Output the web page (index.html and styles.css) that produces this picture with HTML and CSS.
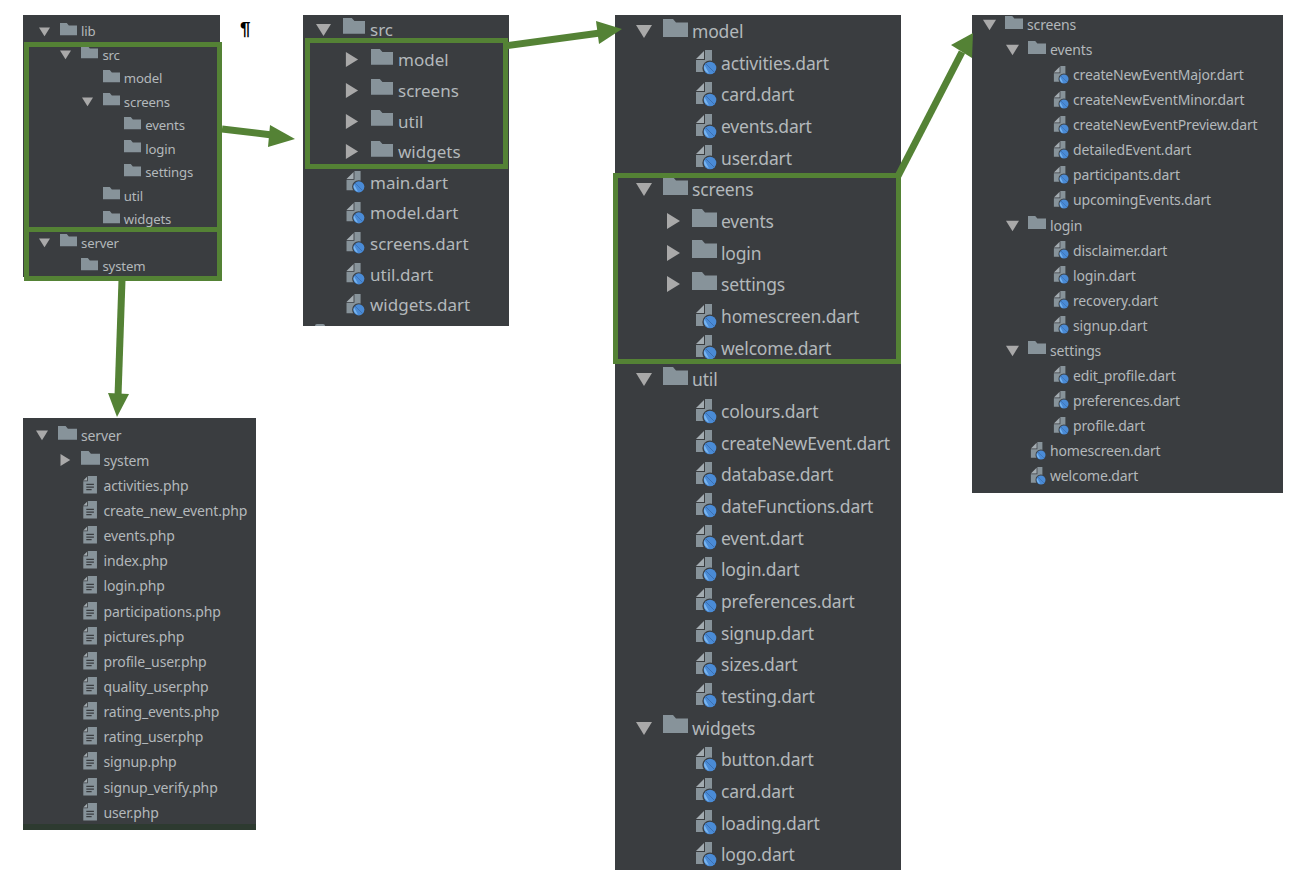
FILE: index.html
```html
<!DOCTYPE html>
<html lang="en">
<head>
    <meta charset="UTF-8">
    <meta name="viewport" content="width=device-width, initial-scale=1.0">
    <title>Project structure</title>
    <link rel="stylesheet" href="styles.css">
</head>
<body>
    <!-- shared icons -->
    <svg class="sprite" aria-hidden="true">
        <symbol id="down" viewBox="0 0 16 16"><path d="M0 2H16L8 15Z"/></symbol>
        <symbol id="right" viewBox="0 0 16 16"><path d="M2 0L15 8L2 16Z"/></symbol>
        <symbol id="folder" viewBox="0 0 25 25"><path d="M0 0H10L13 3.5H25V18H0Z" fill="#87939a"/></symbol>
        <symbol id="dart" viewBox="0 0 25 25">
            <path d="M4 9L12 1V9Z" fill="#a3acb1"/>
            <path d="M13 0H20V22H4V10H13Z" fill="#87939a"/>
            <circle cx="18" cy="18" r="7.6" fill="#3a3d40"/>
            <circle cx="18" cy="18" r="6.3" fill="#4a8bd6"/>
            <path d="M12.5 15L17 23.5A6.3 6.3 0 0 1 12.5 15Z" fill="#7ab6f0"/>
            <path d="M13.5 13.5L22.5 22.5" stroke="#3b6fb0" stroke-width="1"/>
        </symbol>
        <symbol id="php" viewBox="0 0 25 25">
            <path d="M3 6L8 1V6Z" fill="#a3acb1"/>
            <path d="M9 0H21V23H3V7H9Z" fill="#87939a"/>
            <path d="M7 11H17M7 14.5H17M7 18H14" stroke="#3a3d40" stroke-width="1.6"/>
        </symbol>
    </svg>

    <div class="canvas">
        <span class="pilcrow">¶</span>

        <!-- overview -->
        <div class="panel panel-lib">
            <div class="row"><svg class="tw"><use href="#down"/></svg><svg class="ico"><use href="#folder"/></svg>lib</div>
            <div class="row d1"><svg class="tw"><use href="#down"/></svg><svg class="ico"><use href="#folder"/></svg>src</div>
            <div class="row d2"><i class="tw"></i><svg class="ico"><use href="#folder"/></svg>model</div>
            <div class="row d2"><svg class="tw"><use href="#down"/></svg><svg class="ico"><use href="#folder"/></svg>screens</div>
            <div class="row d3"><i class="tw"></i><svg class="ico"><use href="#folder"/></svg>events</div>
            <div class="row d3"><i class="tw"></i><svg class="ico"><use href="#folder"/></svg>login</div>
            <div class="row d3"><i class="tw"></i><svg class="ico"><use href="#folder"/></svg>settings</div>
            <div class="row d2"><i class="tw"></i><svg class="ico"><use href="#folder"/></svg>util</div>
            <div class="row d2"><i class="tw"></i><svg class="ico"><use href="#folder"/></svg>widgets</div>
            <div class="row"><svg class="tw"><use href="#down"/></svg><svg class="ico"><use href="#folder"/></svg>server</div>
            <div class="row d1"><i class="tw"></i><svg class="ico"><use href="#folder"/></svg>system</div>
        </div>

        <!-- src -->
        <div class="panel panel-src">
            <div class="row"><svg class="tw"><use href="#down"/></svg><svg class="ico"><use href="#folder"/></svg>src</div>
            <div class="row d1"><svg class="tw"><use href="#right"/></svg><svg class="ico"><use href="#folder"/></svg>model</div>
            <div class="row d1"><svg class="tw"><use href="#right"/></svg><svg class="ico"><use href="#folder"/></svg>screens</div>
            <div class="row d1"><svg class="tw"><use href="#right"/></svg><svg class="ico"><use href="#folder"/></svg>util</div>
            <div class="row d1"><svg class="tw"><use href="#right"/></svg><svg class="ico"><use href="#folder"/></svg>widgets</div>
            <div class="row"><i class="tw"></i><svg class="ico"><use href="#dart"/></svg>main.dart</div>
            <div class="row"><i class="tw"></i><svg class="ico"><use href="#dart"/></svg>model.dart</div>
            <div class="row"><i class="tw"></i><svg class="ico"><use href="#dart"/></svg>screens.dart</div>
            <div class="row"><i class="tw"></i><svg class="ico"><use href="#dart"/></svg>util.dart</div>
            <div class="row"><i class="tw"></i><svg class="ico"><use href="#dart"/></svg>widgets.dart</div>
            <div class="panel-peek"></div>
        </div>

        <!-- model, screens, util, widgets -->
        <div class="panel panel-model">
            <div class="row"><svg class="tw"><use href="#down"/></svg><svg class="ico"><use href="#folder"/></svg>model</div>
            <div class="row d1"><i class="tw"></i><svg class="ico"><use href="#dart"/></svg>activities.dart</div>
            <div class="row d1"><i class="tw"></i><svg class="ico"><use href="#dart"/></svg>card.dart</div>
            <div class="row d1"><i class="tw"></i><svg class="ico"><use href="#dart"/></svg>events.dart</div>
            <div class="row d1"><i class="tw"></i><svg class="ico"><use href="#dart"/></svg>user.dart</div>
            <div class="row"><svg class="tw"><use href="#down"/></svg><svg class="ico"><use href="#folder"/></svg>screens</div>
            <div class="row d1"><svg class="tw"><use href="#right"/></svg><svg class="ico"><use href="#folder"/></svg>events</div>
            <div class="row d1"><svg class="tw"><use href="#right"/></svg><svg class="ico"><use href="#folder"/></svg>login</div>
            <div class="row d1"><svg class="tw"><use href="#right"/></svg><svg class="ico"><use href="#folder"/></svg>settings</div>
            <div class="row d1"><i class="tw"></i><svg class="ico"><use href="#dart"/></svg>homescreen.dart</div>
            <div class="row d1"><i class="tw"></i><svg class="ico"><use href="#dart"/></svg>welcome.dart</div>
            <div class="row"><svg class="tw"><use href="#down"/></svg><svg class="ico"><use href="#folder"/></svg>util</div>
            <div class="row d1"><i class="tw"></i><svg class="ico"><use href="#dart"/></svg>colours.dart</div>
            <div class="row d1"><i class="tw"></i><svg class="ico"><use href="#dart"/></svg>createNewEvent.dart</div>
            <div class="row d1"><i class="tw"></i><svg class="ico"><use href="#dart"/></svg>database.dart</div>
            <div class="row d1"><i class="tw"></i><svg class="ico"><use href="#dart"/></svg>dateFunctions.dart</div>
            <div class="row d1"><i class="tw"></i><svg class="ico"><use href="#dart"/></svg>event.dart</div>
            <div class="row d1"><i class="tw"></i><svg class="ico"><use href="#dart"/></svg>login.dart</div>
            <div class="row d1"><i class="tw"></i><svg class="ico"><use href="#dart"/></svg>preferences.dart</div>
            <div class="row d1"><i class="tw"></i><svg class="ico"><use href="#dart"/></svg>signup.dart</div>
            <div class="row d1"><i class="tw"></i><svg class="ico"><use href="#dart"/></svg>sizes.dart</div>
            <div class="row d1"><i class="tw"></i><svg class="ico"><use href="#dart"/></svg>testing.dart</div>
            <div class="row"><svg class="tw"><use href="#down"/></svg><svg class="ico"><use href="#folder"/></svg>widgets</div>
            <div class="row d1"><i class="tw"></i><svg class="ico"><use href="#dart"/></svg>button.dart</div>
            <div class="row d1"><i class="tw"></i><svg class="ico"><use href="#dart"/></svg>card.dart</div>
            <div class="row d1"><i class="tw"></i><svg class="ico"><use href="#dart"/></svg>loading.dart</div>
            <div class="row d1"><i class="tw"></i><svg class="ico"><use href="#dart"/></svg>logo.dart</div>
        </div>

        <!-- screens -->
        <div class="panel panel-screens">
            <div class="row"><svg class="tw"><use href="#down"/></svg><svg class="ico"><use href="#folder"/></svg>screens</div>
            <div class="row d1"><svg class="tw"><use href="#down"/></svg><svg class="ico"><use href="#folder"/></svg>events</div>
            <div class="row d2"><i class="tw"></i><svg class="ico"><use href="#dart"/></svg>createNewEventMajor.dart</div>
            <div class="row d2"><i class="tw"></i><svg class="ico"><use href="#dart"/></svg>createNewEventMinor.dart</div>
            <div class="row d2"><i class="tw"></i><svg class="ico"><use href="#dart"/></svg>createNewEventPreview.dart</div>
            <div class="row d2"><i class="tw"></i><svg class="ico"><use href="#dart"/></svg>detailedEvent.dart</div>
            <div class="row d2"><i class="tw"></i><svg class="ico"><use href="#dart"/></svg>participants.dart</div>
            <div class="row d2"><i class="tw"></i><svg class="ico"><use href="#dart"/></svg>upcomingEvents.dart</div>
            <div class="row d1"><svg class="tw"><use href="#down"/></svg><svg class="ico"><use href="#folder"/></svg>login</div>
            <div class="row d2"><i class="tw"></i><svg class="ico"><use href="#dart"/></svg>disclaimer.dart</div>
            <div class="row d2"><i class="tw"></i><svg class="ico"><use href="#dart"/></svg>login.dart</div>
            <div class="row d2"><i class="tw"></i><svg class="ico"><use href="#dart"/></svg>recovery.dart</div>
            <div class="row d2"><i class="tw"></i><svg class="ico"><use href="#dart"/></svg>signup.dart</div>
            <div class="row d1"><svg class="tw"><use href="#down"/></svg><svg class="ico"><use href="#folder"/></svg>settings</div>
            <div class="row d2"><i class="tw"></i><svg class="ico"><use href="#dart"/></svg>edit_profile.dart</div>
            <div class="row d2"><i class="tw"></i><svg class="ico"><use href="#dart"/></svg>preferences.dart</div>
            <div class="row d2"><i class="tw"></i><svg class="ico"><use href="#dart"/></svg>profile.dart</div>
            <div class="row d1"><i class="tw"></i><svg class="ico"><use href="#dart"/></svg>homescreen.dart</div>
            <div class="row d1"><i class="tw"></i><svg class="ico"><use href="#dart"/></svg>welcome.dart</div>
        </div>

        <!-- server -->
        <div class="panel panel-server">
            <div class="row"><svg class="tw"><use href="#down"/></svg><svg class="ico"><use href="#folder"/></svg>server</div>
            <div class="row d1"><svg class="tw"><use href="#right"/></svg><svg class="ico"><use href="#folder"/></svg>system</div>
            <div class="row d1"><i class="tw"></i><svg class="ico"><use href="#php"/></svg>activities.php</div>
            <div class="row d1"><i class="tw"></i><svg class="ico"><use href="#php"/></svg>create_new_event.php</div>
            <div class="row d1"><i class="tw"></i><svg class="ico"><use href="#php"/></svg>events.php</div>
            <div class="row d1"><i class="tw"></i><svg class="ico"><use href="#php"/></svg>index.php</div>
            <div class="row d1"><i class="tw"></i><svg class="ico"><use href="#php"/></svg>login.php</div>
            <div class="row d1"><i class="tw"></i><svg class="ico"><use href="#php"/></svg>participations.php</div>
            <div class="row d1"><i class="tw"></i><svg class="ico"><use href="#php"/></svg>pictures.php</div>
            <div class="row d1"><i class="tw"></i><svg class="ico"><use href="#php"/></svg>profile_user.php</div>
            <div class="row d1"><i class="tw"></i><svg class="ico"><use href="#php"/></svg>quality_user.php</div>
            <div class="row d1"><i class="tw"></i><svg class="ico"><use href="#php"/></svg>rating_events.php</div>
            <div class="row d1"><i class="tw"></i><svg class="ico"><use href="#php"/></svg>rating_user.php</div>
            <div class="row d1"><i class="tw"></i><svg class="ico"><use href="#php"/></svg>signup.php</div>
            <div class="row d1"><i class="tw"></i><svg class="ico"><use href="#php"/></svg>signup_verify.php</div>
            <div class="row d1"><i class="tw"></i><svg class="ico"><use href="#php"/></svg>user.php</div>
            <div class="panel-foot"></div>
        </div>

        <!-- green highlights and arrows -->
        <div class="mark mark-src"></div>
        <div class="mark mark-server"></div>
        <div class="mark mark-folders"></div>
        <div class="mark mark-screens"></div>

        <svg class="arrows" viewBox="0 0 1299 894">
            <path d="M222 129L272 135" class="shaft"/>
            <path d="M270 125L295 139L268 147Z" class="head"/>
            <path d="M505 46L600 33" class="shaft"/>
            <path d="M596 21L622 29L599 44Z" class="head"/>
            <path d="M897 178L962 52" class="shaft"/>
            <path d="M951 45L973 33L972 58Z" class="head"/>
            <path d="M122 280L118 396" class="shaft"/>
            <path d="M108 393L129 394L117 417Z" class="head"/>
        </svg>
    </div>
</body>
</html>
```

FILE: styles.css
```css
html, body {
    margin: 0;
    padding: 0;
    background: #fff;
}

.sprite {
    display: none;
}

.canvas {
    position: relative;
    width: 1299px;
    height: 894px;
    overflow: hidden;
    font-family: "Noto Sans", sans-serif;
}

.pilcrow {
    position: absolute;
    left: 240px;
    top: 18px;
    font-family: "Liberation Sans", sans-serif;
    font-size: 19px;
    font-weight: bold;
    color: #000;
}

/* pasted tree screenshots */
.panel {
    position: absolute;
    overflow: hidden;
    box-sizing: border-box;
    background: #3a3d40;
    color: #b3b8bb;
}

.panel-lib {
    left: 23px;
    top: 15px;
    width: 197px;
    height: 262px;
    padding-top: 4.6px;
    font-size: 13.2px;
    letter-spacing: -0.15px;
    --row: 23.5px;
    --indent: 21.4px;
    --pad: 16px;
    --slot: 21px;
    --tw: 11px;
    --icon: 17px;
    --gap: 4px;
}

.panel-src {
    left: 303px;
    top: 15px;
    width: 206px;
    height: 311px;
    font-size: 17px;
    --row: 30.6px;
    --indent: 28px;
    --pad: 13px;
    --slot: 27px;
    --tw: 15px;
    --icon: 22px;
    --gap: 5px;
}

.panel-src .row:first-child {
    margin-top: -1px;
}

.panel-peek {
    position: absolute;
    left: 12px;
    bottom: 0;
    width: 10px;
    height: 2px;
    background: #87939a;
    border-radius: 4px 4px 0 0;
}

.panel-model {
    left: 615px;
    top: 15px;
    width: 286px;
    height: 855px;
    padding-top: 0.3px;
    font-size: 17.5px;
    letter-spacing: -0.17px;
    --row: 31.66px;
    --indent: 29px;
    --pad: 21px;
    --slot: 27px;
    --tw: 16px;
    --icon: 25px;
    --gap: 4px;
}

.panel-screens {
    left: 972px;
    top: 15px;
    width: 311px;
    height: 478px;
    font-size: 14px;
    letter-spacing: -0.14px;
    --row: 25.07px;
    --indent: 23px;
    --pad: 11px;
    --slot: 22px;
    --tw: 13px;
    --icon: 18px;
    --gap: 4px;
}

.panel-screens .row:first-child {
    margin-top: -3px;
}

.panel-server {
    left: 23px;
    top: 418px;
    width: 233px;
    height: 412px;
    padding-top: 4.5px;
    font-size: 14px;
    letter-spacing: -0.14px;
    --row: 25.15px;
    --indent: 22.5px;
    --pad: 13px;
    --slot: 22px;
    --tw: 12px;
    --icon: 19px;
    --gap: 4px;
}

.panel-foot {
    position: absolute;
    left: 0;
    right: 0;
    bottom: 0;
    height: 6px;
    background: #2d3a30;
}

.row {
    display: flex;
    align-items: center;
    height: var(--row);
    padding-left: var(--pad);
    white-space: nowrap;
}

.d1 { padding-left: calc(var(--pad) + var(--indent)); }
.d2 { padding-left: calc(var(--pad) + var(--indent) * 2); }
.d3 { padding-left: calc(var(--pad) + var(--indent) * 3); }

.tw {
    flex: none;
    width: var(--tw);
    height: var(--tw);
    margin-right: calc(var(--slot) - var(--tw));
    fill: #a9a9a9;
}

.ico {
    flex: none;
    width: var(--icon);
    height: var(--icon);
    margin-right: var(--gap);
}

/* green boxes drawn on top */
.mark {
    position: absolute;
    box-sizing: border-box;
    border: 5px solid #548235;
}

.mark-src { left: 24px; top: 42px; width: 198px; height: 190px; }
.mark-server { left: 24px; top: 227px; width: 198px; height: 54px; }
.mark-folders { left: 305px; top: 38px; width: 203px; height: 131px; }
.mark-screens { left: 613px; top: 173px; width: 288px; height: 191px; }

.arrows {
    position: absolute;
    left: 0;
    top: 0;
    width: 1299px;
    height: 894px;
}

.shaft {
    fill: none;
    stroke: #548235;
    stroke-width: 7;
}

.head {
    fill: #548235;
}
```
